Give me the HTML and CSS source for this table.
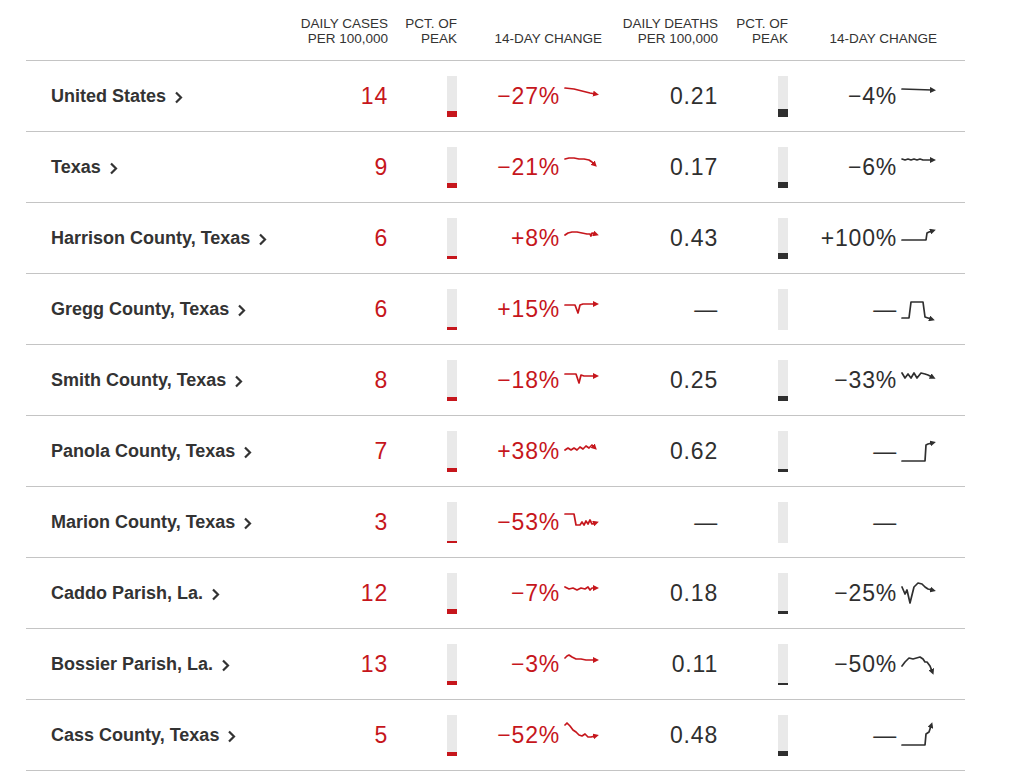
FILE: index.html
```html
<!DOCTYPE html>
<html lang="en">
<head>
<meta charset="utf-8">
<title>Cases table</title>
<link rel="stylesheet" href="styles.css">
</head>
<body>
<svg class="defs" width="0" height="0" aria-hidden="true">
  <defs>
    <marker id="ar" viewBox="0 0 6 6" refX="2" refY="3" markerWidth="6" markerHeight="6" markerUnits="userSpaceOnUse" orient="auto"><path d="M0,0 L6,3 L0,6 z" fill="#c6161c"/></marker>
    <marker id="ad" viewBox="0 0 6 6" refX="2" refY="3" markerWidth="6" markerHeight="6" markerUnits="userSpaceOnUse" orient="auto"><path d="M0,0 L6,3 L0,6 z" fill="#2f2f2f"/></marker>
  </defs>
</svg>
<div class="table">
  <div class="row head">
    <div class="h"></div>
    <div class="h">Daily cases<br>per 100,000</div>
    <div class="h">Pct. of<br>peak</div>
    <div class="h">14-day change</div>
    <div class="h">Daily deaths<br>per 100,000</div>
    <div class="h">Pct. of<br>peak</div>
    <div class="h last">14-day change</div>
  </div>

  <div class="row">
    <div class="name">United States <svg class="chev" viewBox="0 0 9 13"><polyline points="2,1.5 7,6.5 2,11.5"/></svg></div>
    <div class="num red">14</div>
    <div class="barcell"><div class="bar"><div class="fill red-bg" style="height:6px"></div></div></div>
    <div class="chg red">−27%<svg class="spark" viewBox="0 0 38 30"><polyline class="sr" points="1,7 10,8 18,10 26,12 31,13"/></svg></div>
    <div class="num">0.21</div>
    <div class="barcell"><div class="bar"><div class="fill dark-bg" style="height:8px"></div></div></div>
    <div class="chg">−4%<svg class="spark" viewBox="0 0 38 30"><polyline class="sd" points="1,8 31,9"/></svg></div>
  </div>

  <div class="row">
    <div class="name">Texas <svg class="chev" viewBox="0 0 9 13"><polyline points="2,1.5 7,6.5 2,11.5"/></svg></div>
    <div class="num red">9</div>
    <div class="barcell"><div class="bar"><div class="fill red-bg" style="height:5px"></div></div></div>
    <div class="chg red">−21%<svg class="spark" viewBox="0 0 38 30"><polyline class="sr" points="1,7 5,6 10,6 15,7 20,7 25,8 28,10 30,12"/></svg></div>
    <div class="num">0.17</div>
    <div class="barcell"><div class="bar"><div class="fill dark-bg" style="height:6px"></div></div></div>
    <div class="chg">−6%<svg class="spark" viewBox="0 0 38 30"><polyline class="sd" points="1,7 4,8 7,7 10,8 13,7 16,8 19,7 22,8 25,8 31,8"/></svg></div>
  </div>

  <div class="row">
    <div class="name">Harrison County, Texas <svg class="chev" viewBox="0 0 9 13"><polyline points="2,1.5 7,6.5 2,11.5"/></svg></div>
    <div class="num red">6</div>
    <div class="barcell"><div class="bar"><div class="fill red-bg" style="height:3px"></div></div></div>
    <div class="chg red">+8%<svg class="spark" viewBox="0 0 38 30"><polyline class="sr" points="1,12 4,10 8,9 13,9 18,10 23,11 26,11 27,13 28,10 31,11"/></svg></div>
    <div class="num">0.43</div>
    <div class="barcell"><div class="bar"><div class="fill dark-bg" style="height:6px"></div></div></div>
    <div class="chg">+100%<svg class="spark" viewBox="0 0 38 30"><polyline class="sd" points="1,17 25,17 26,10 28,9 31,8"/></svg></div>
  </div>

  <div class="row">
    <div class="name">Gregg County, Texas <svg class="chev" viewBox="0 0 9 13"><polyline points="2,1.5 7,6.5 2,11.5"/></svg></div>
    <div class="num red">6</div>
    <div class="barcell"><div class="bar"><div class="fill red-bg" style="height:3px"></div></div></div>
    <div class="chg red">+15%<svg class="spark" viewBox="0 0 38 30"><polyline class="sr" points="1,11 11,11 14,19 16,11 19,10 31,10"/></svg></div>
    <div class="num">—</div>
    <div class="barcell"><div class="bar"></div></div>
    <div class="chg">—<svg class="spark" viewBox="0 0 38 30"><polyline class="sd" points="1,24 8,24 10,8 22,8 24,23 30,25"/></svg></div>
  </div>

  <div class="row">
    <div class="name">Smith County, Texas <svg class="chev" viewBox="0 0 9 13"><polyline points="2,1.5 7,6.5 2,11.5"/></svg></div>
    <div class="num red">8</div>
    <div class="barcell"><div class="bar"><div class="fill red-bg" style="height:4px"></div></div></div>
    <div class="chg red">−18%<svg class="spark" viewBox="0 0 38 30"><polyline class="sr" points="1,9 12,9 15,18 17,10 20,11 31,11"/></svg></div>
    <div class="num">0.25</div>
    <div class="barcell"><div class="bar"><div class="fill dark-bg" style="height:5px"></div></div></div>
    <div class="chg">−33%<svg class="spark" viewBox="0 0 38 30"><polyline class="sd" points="1,8 4,13 7,9 10,13 13,8 16,13 20,8 24,9 27,10 31,12"/></svg></div>
  </div>

  <div class="row">
    <div class="name">Panola County, Texas <svg class="chev" viewBox="0 0 9 13"><polyline points="2,1.5 7,6.5 2,11.5"/></svg></div>
    <div class="num red">7</div>
    <div class="barcell"><div class="bar"><div class="fill red-bg" style="height:4px"></div></div></div>
    <div class="chg red">+38%<svg class="spark" viewBox="0 0 38 30"><polyline class="sr" points="1,14 4,12 7,14 10,12 13,14 16,11 19,13 22,10 25,12 28,9 30,11"/></svg></div>
    <div class="num">0.62</div>
    <div class="barcell"><div class="bar"><div class="fill dark-bg" style="height:3px"></div></div></div>
    <div class="chg">—<svg class="spark" viewBox="0 0 38 30"><polyline class="sd" points="1,25 24,25 25,9 27,8 31,7"/></svg></div>
  </div>

  <div class="row">
    <div class="name">Marion County, Texas <svg class="chev" viewBox="0 0 9 13"><polyline points="2,1.5 7,6.5 2,11.5"/></svg></div>
    <div class="num red">3</div>
    <div class="barcell"><div class="bar"><div class="fill red-bg" style="height:2px"></div></div></div>
    <div class="chg red">−53%<svg class="spark" viewBox="0 0 38 30"><polyline class="sr" points="1,7 10,7 12,18 16,18 18,15 20,18 22,14 24,17 26,13 28,17 31,16"/></svg></div>
    <div class="num">—</div>
    <div class="barcell"><div class="bar"></div></div>
    <div class="chg">—<svg class="spark" viewBox="0 0 38 30"></svg></div>
  </div>

  <div class="row">
    <div class="name">Caddo Parish, La. <svg class="chev" viewBox="0 0 9 13"><polyline points="2,1.5 7,6.5 2,11.5"/></svg></div>
    <div class="num red">12</div>
    <div class="barcell"><div class="bar"><div class="fill red-bg" style="height:5px"></div></div></div>
    <div class="chg red">−7%<svg class="spark" viewBox="0 0 38 30"><polyline class="sr" points="1,9 5,11 9,10 13,12 17,10 21,11 24,9 26,12 28,10 31,10"/></svg></div>
    <div class="num">0.18</div>
    <div class="barcell"><div class="bar"><div class="fill dark-bg" style="height:3px"></div></div></div>
    <div class="chg">−25%<svg class="spark" viewBox="0 0 38 30"><polyline class="sd" points="1,9 4,16 6,12 9,25 13,9 17,5 21,6 24,9 27,11 31,12"/></svg></div>
  </div>

  <div class="row">
    <div class="name">Bossier Parish, La. <svg class="chev" viewBox="0 0 9 13"><polyline points="2,1.5 7,6.5 2,11.5"/></svg></div>
    <div class="num red">13</div>
    <div class="barcell"><div class="bar"><div class="fill red-bg" style="height:4px"></div></div></div>
    <div class="chg red">−3%<svg class="spark" viewBox="0 0 38 30"><polyline class="sr" points="1,9 3,7 5,6 8,8 12,10 17,10 22,11 31,11"/></svg></div>
    <div class="num">0.11</div>
    <div class="barcell"><div class="bar"><div class="fill dark-bg" style="height:2px"></div></div></div>
    <div class="chg">−50%<svg class="spark" viewBox="0 0 38 30"><polyline class="sd" points="1,17 4,13 8,9 12,10 19,8 22,10 24,13 26,13 29,17 31,22"/></svg></div>
  </div>

  <div class="row">
    <div class="name">Cass County, Texas <svg class="chev" viewBox="0 0 9 13"><polyline points="2,1.5 7,6.5 2,11.5"/></svg></div>
    <div class="num red">5</div>
    <div class="barcell"><div class="bar"><div class="fill red-bg" style="height:4px"></div></div></div>
    <div class="chg red">−52%<svg class="spark" viewBox="0 0 38 30"><polyline class="sr" points="1,5 3,3 6,6 9,10 12,12 15,15 18,16 21,14 24,17 27,17 31,16"/></svg></div>
    <div class="num">0.48</div>
    <div class="barcell"><div class="bar"><div class="fill dark-bg" style="height:5px"></div></div></div>
    <div class="chg">—<svg class="spark" viewBox="0 0 38 30"><polyline class="sd" points="1,25 24,25 25,14 28,12 30,6"/></svg></div>
  </div>
</div>
</body>
</html>
```
FILE: styles.css
```css
html, body {
  margin: 0;
  padding: 0;
  background: #fff;
}
body {
  font-family: "Liberation Sans", Arial, sans-serif;
  color: #2f2f2f;
}
.defs {
  position: absolute;
  width: 0;
  height: 0;
  overflow: hidden;
}
.table {
  margin-left: 26px;
  width: 939px;
}
.row {
  display: grid;
  grid-template-columns: 264px 98px 69px 145px 116px 70px 151px;
  padding-right: 26px;
  height: 71px;
  box-sizing: border-box;
  border-bottom: 1px solid #c4c4c4;
  align-items: center;
}
.row.head {
  height: 61px;
  align-items: end;
  padding-bottom: 14px;
}
.h {
  font-size: 13.5px;
  line-height: 15px;
  text-transform: uppercase;
  text-align: right;
  color: #333;
}
.h.last {
  padding-right: 2px;
}
.name {
  padding-left: 25px;
  font-size: 18px;
  font-weight: 700;
  color: #333;
  display: flex;
  align-items: center;
  gap: 8px;
}
.chev {
  width: 9px;
  height: 13px;
  margin-top: 2px;
  fill: none;
  stroke: #333;
  stroke-width: 2.2;
}
.num {
  font-size: 23px;
  letter-spacing: 0.8px;
  text-align: right;
  color: #2f2f2f;
}
.red {
  color: #c6161c;
}
.barcell {
  display: flex;
  justify-content: flex-end;
}
.bar {
  width: 10px;
  height: 41px;
  background: #e9e9e9;
  display: flex;
  flex-direction: column;
  justify-content: flex-end;
}
.fill {
  width: 100%;
}
.red-bg {
  background: #c6161c;
}
.dark-bg {
  background: #2f2f2f;
}
.chg {
  display: flex;
  justify-content: flex-end;
  align-items: center;
  gap: 4px;
  font-size: 23px;
  letter-spacing: 0.8px;
  line-height: 30px;
}
.spark {
  width: 38px;
  height: 30px;
  flex: none;
}
.spark polyline {
  fill: none;
  stroke-width: 1.7;
  stroke-linejoin: round;
  stroke-linecap: round;
}
.spark .sr {
  stroke: #c6161c;
  marker-end: url(#ar);
}
.spark .sd {
  stroke: #2f2f2f;
  marker-end: url(#ad);
}
```
